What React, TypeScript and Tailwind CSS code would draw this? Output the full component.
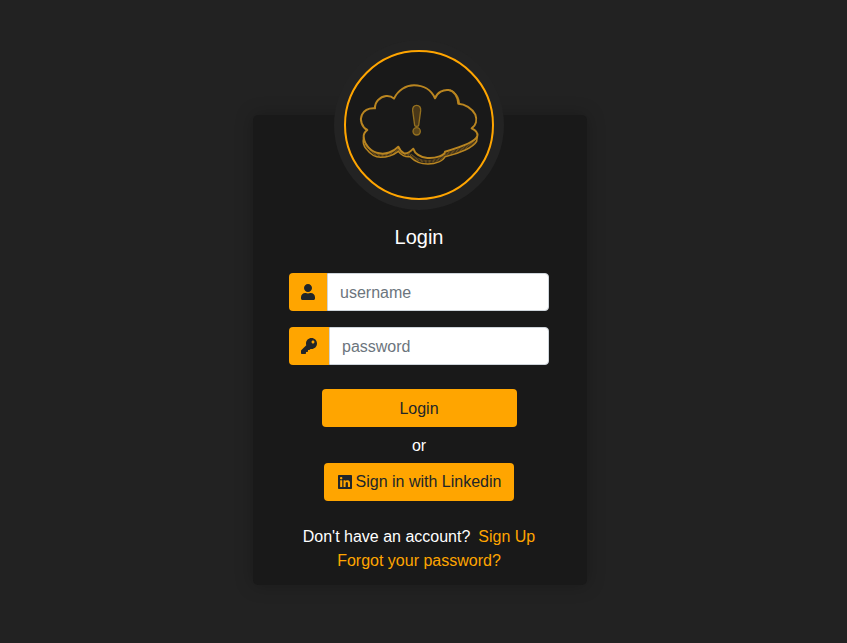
import { FaUser, FaKey, FaLinkedin } from "react-icons/fa";

function CloudLogo() {
  const top =
    "M112 270 C96 262 88 240 96 224 C104 208 120 204 135 205 C134 186 150 170 168 168 C178 167 186 170 192 176 C204 150 228 136 252 136 C280 136 304 150 315 175 C322 156 340 148 356 150 C372 152 384 170 385 191 C404 192 426 204 436 224 C442 240 438 256 425 265 C436 270 444 278 442 288 C438 304 404 318 345 335 C345 345 318 356 292 354 C270 352 254 340 250 326 C240 336 228 342 222 340 C214 336 208 328 205 320 C190 336 166 344 148 340 C124 336 104 316 101 292 C100 284 104 276 112 270 Z";
  const side =
    "M101 292 C98 304 100 316 108 326 C120 342 136 352 152 352 C174 352 192 344 205 334 C212 344 226 352 240 350 C252 362 272 372 294 372 C318 372 340 362 345 350 C390 340 430 322 440 304 L442 288";
  const hatch =
    "M106 312 C118 332 134 346 152 346 C174 346 192 338 205 327 C214 338 226 346 241 343 C254 356 272 364 294 364 C316 364 338 356 345 343 C388 332 424 318 438 298";
  return (
    <svg viewBox="42 30 450 450" width="150" height="150" className="shrink-0" fill="none" strokeLinejoin="round" strokeLinecap="round">
      <path d={hatch} stroke="#8a6420" strokeWidth="9" strokeDasharray="2 2" strokeLinecap="butt" />
      <path d={side} stroke="#b98520" strokeWidth="4.5" />
      <path d={top} stroke="#b98520" strokeWidth="6" />
      <path d="M385 191 C384 172 376 158 360 150 C376 154 388 170 389 191" fill="#b98520" stroke="#b98520" strokeWidth="2" />
      <path d="M260 196 C252 196 247 202 248 212 L254 256 C255 260 265 260 266 256 L272 212 C273 202 268 196 260 196 Z" fill="#4a3818" stroke="#94701f" strokeWidth="4" />
      <circle cx="260" cy="274" r="11" fill="#5c461a" stroke="#94701f" strokeWidth="4" />
    </svg>
  );
}

function Field({ icon, addon, placeholder, type }: { icon: React.ReactNode; addon: string; placeholder: string; type: string }) {
  return (
    <div className="flex h-[38px] w-[260px]">
      <span className={`${addon} flex shrink-0 items-center justify-center rounded-l bg-[#ffa500] text-[#212529]`}>{icon}</span>
      <input
        type={type}
        placeholder={placeholder}
        className="min-w-0 flex-1 rounded-r border border-[#ced4da] bg-white px-3 pt-0.5 text-base text-[#495057] outline-none placeholder:text-[#6c757d]"
      />
    </div>
  );
}

export default function App() {
  return (
    <div className="min-h-[643px] overflow-hidden bg-[#222222] pt-[115px] pr-[7px] font-['Liberation_Sans',Arial,sans-serif] text-base leading-6 text-white">
      <div className="mx-auto flex h-[470px] w-[334px] flex-col items-center rounded-[5px] bg-[#191919] pr-[2px] shadow-[0_0_18px_rgba(0,0,0,0.25)]">
        <div className="-mt-[75px] flex h-[170px] w-[170px] shrink-0 items-center justify-center rounded-full bg-[#232323]">
          <div className="flex h-[150px] w-[150px] items-center justify-center overflow-hidden rounded-full border-2 border-[#ffa500] bg-[#191919]">
            <CloudLogo />
          </div>
        </div>
        <h1 className="mt-3 text-xl leading-[30px] font-normal">Login</h1>
        <div className="mt-[21px] flex flex-col gap-4">
          <Field type="text" placeholder="username" addon="w-[38px]" icon={<FaUser size={16} />} />
          <Field type="password" placeholder="password" addon="w-[40px]" icon={<FaKey size={16} />} />
        </div>
        <button className="mt-6 h-[38px] w-[195px] rounded bg-[#ffa500] pt-0.5 text-base text-[#212529]">Login</button>
        <div className="mt-[7px] -mb-px">or</div>
        <button className="mt-1.5 flex h-[38px] w-[190px] items-center justify-center gap-[3px] rounded bg-[#ffa500] text-base text-[#212529]">
          <FaLinkedin size={16} />
          <span>Sign in with Linkedin</span>
        </button>
        <div className="mt-6 flex justify-center gap-2">
          <span>Don't have an account?</span>
          <a href="#" className="text-[#ffa500]">Sign Up</a>
        </div>
        <a href="#" className="text-[#ffa500]">Forgot your password?</a>
      </div>
    </div>
  );
}
